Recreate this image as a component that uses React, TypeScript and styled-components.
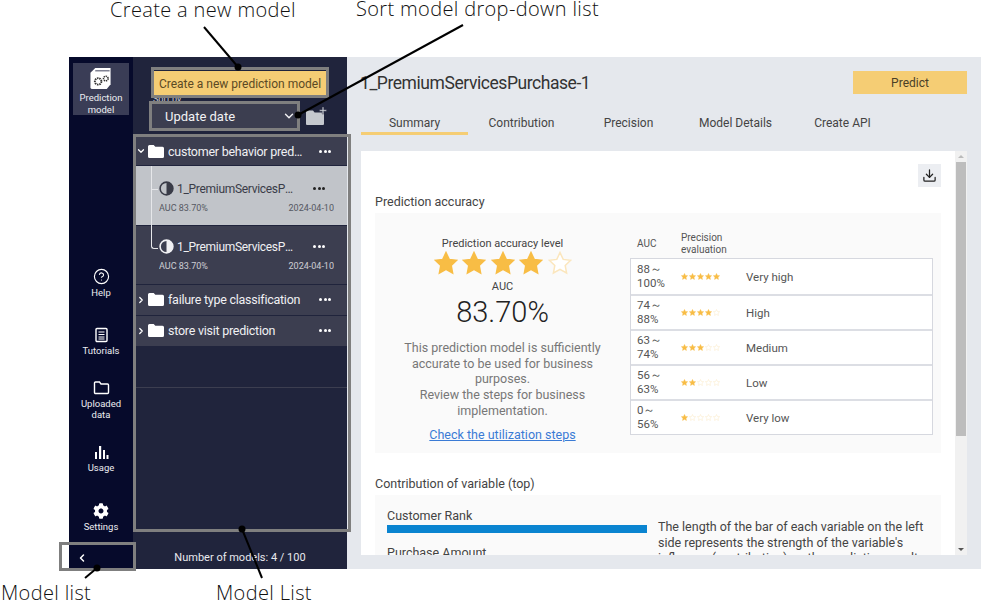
import React from 'react';
import styled, { createGlobalStyle } from 'styled-components';
import { ChevronDown, ChevronLeft, ChevronRight, CircleHelp, Download } from 'lucide-react';
import { FaCog } from 'react-icons/fa';

const GlobalStyle = createGlobalStyle`
  html, body {
    margin: 0;
    padding: 0;
    background: #fff;
    font-family: Roboto, "Noto Sans", "Liberation Sans", sans-serif;
  }
  * { box-sizing: border-box; }
`;

const Page = styled.div`
  position: relative;
  width: 983px;
  height: 603px;
  padding: 57px 0 0 69px;
  overflow: hidden;
`;

const Frame = styled.div`
  display: flex;
  width: 912px;
  height: 512px;
`;

/* left icon rail */
const Rail = styled.nav`
  width: 64px;
  flex: none;
  background: #060a2b;
  display: flex;
  flex-direction: column;
  align-items: stretch;
`;

const RailActive = styled.div`
  margin: 6px 4px 0;
  height: 52px;
  background: #3a3d56;
  display: flex;
  flex-direction: column;
  align-items: center;
  padding-top: 4px;
  gap: 2px;
`;

const RailBottom = styled.div`
  margin-top: auto;
  display: flex;
  flex-direction: column;
`;

const RailItem = styled.div`
  height: 58.5px;
  display: flex;
  flex-direction: column;
  align-items: center;
  justify-content: center;
  color: #fff;
`;

const RailLabel = styled.span`
  color: #eceDf1;
  font-size: 9.5px;
  line-height: 11.5px;
  text-align: center;
`;

const RailIcon = styled.span`
  height: 18px;
  display: flex;
  align-items: center;
  justify-content: center;
  margin-bottom: 1px;
`;

const Collapse = styled.div`
  height: 23px;
  display: flex;
  align-items: center;
  padding-left: 7px;
  color: #fff;
`;

/* model list column */
const ListPanel = styled.aside`
  width: 214px;
  flex: none;
  background: #20243c;
  display: flex;
  flex-direction: column;
`;

const CreateButton = styled.button`
  display: block;
  margin: 14px 0 0 21px;
  width: 172px;
  height: 24px;
  border: none;
  padding: 1px 0 0;
  background: #f5cd74;
  color: #5b4a24;
  font-family: inherit;
  font-size: 12px;
`;

const SortLabel = styled.div`
  margin-left: 20px;
  height: 9px;
  line-height: 9px;
  font-size: 9px;
  color: #c9cbd3;
`;

const SortRow = styled.div`
  display: flex;
  align-items: center;
  margin-left: 19px;
  gap: 9px;
`;

const SortSelect = styled.div`
  width: 145px;
  height: 24px;
  background: #3c3e50;
  color: #f2f2f4;
  font-size: 13px;
  display: flex;
  align-items: center;
  justify-content: space-between;
  padding: 0 1px 0 13px;
`;

const ModelList = styled.div`
  margin-top: 9px;
  flex: 1;
  display: flex;
  flex-direction: column;
  gap: 1px;
  border-bottom: 1px solid #3c3e50;
`;

const FolderRow = styled.div<{ $tall?: boolean }>`
  height: ${p => (p.$tall ? 30 : 28)}px;
  padding: 0 0 ${p => (p.$tall ? 1 : 0)}px 3px;
  background: #3c3e50;
  display: flex;
  align-items: center;
  color: #fff;
  gap: 2px;
`;

const FolderName = styled.span`
  margin-left: 2px;
  width: 136px;
  font-size: 12.5px;
  letter-spacing: -0.25px;
  color: #f0f0f3;
  white-space: nowrap;
  overflow: hidden;
  text-overflow: ellipsis;
`;

const More = styled.span<{ $dark?: boolean; $gap: number }>`
  display: flex;
  gap: 1.5px;
  margin-left: ${p => p.$gap}px;
  & > i {
    width: 3px;
    height: 3px;
    border-radius: 50%;
    background: ${p => (p.$dark ? '#222' : '#fff')};
  }
`;

const ModelRow = styled.div<{ $selected?: boolean }>`
  position: relative;
  height: ${p => (p.$selected ? 59 : 58)}px;
  background: ${p => (p.$selected ? '#c1c4c9' : '#3c3e50')};
  color: ${p => (p.$selected ? '#3a3c48' : '#f0f0f3')};
  padding: ${p => (p.$selected ? 14 : 12)}px 0 0 26px;
`;

const TreeLine = styled.span<{ $last?: boolean }>`
  position: absolute;
  left: 18px;
  top: 0;
  width: 7px;
  height: ${p => (p.$last ? 23 : 24)}px;
  border-left: 1px solid #e6e7ea;
  border-bottom: 1px solid #e6e7ea;
  border-bottom-left-radius: ${p => (p.$last ? '3px' : '0')};
  &::after {
    content: '';
    display: ${p => (p.$last ? 'none' : 'block')};
    position: absolute;
    left: -1px;
    top: 24px;
    height: 36px;
    border-left: 1px solid #e6e7ea;
  }
`;

const ModelTitle = styled.div`
  display: flex;
  align-items: center;
  height: 17px;
`;

const ModelName = styled.span`
  margin-left: 3px;
  width: 122px;
  font-size: 12px;
  letter-spacing: -0.3px;
  white-space: nowrap;
  overflow: hidden;
  text-overflow: ellipsis;
`;

const ModelMeta = styled.div`
  display: flex;
  justify-content: space-between;
  width: 175px;
  margin-top: 6px;
  font-size: 9px;
  line-height: 11px;
  opacity: 0.8;
`;

const ListFooter = styled.div`
  height: 23px;
  margin-top: 158px;
  display: flex;
  align-items: center;
  justify-content: center;
  color: #e8e9ee;
  font-size: 11px;
`;

/* main area */
const Main = styled.main`
  flex: 1;
  background: #e5e8ed;
  padding: 14px;
  display: flex;
  flex-direction: column;
`;

const Header = styled.header`
  display: flex;
  justify-content: space-between;
  align-items: center;
  height: 23px;
`;

const Title = styled.h1`
  margin: 0 0 0 -1px;
  font-size: 17.5px;
  letter-spacing: -0.44px;
  font-weight: 400;
  color: #333;
`;

const PredictButton = styled.button`
  width: 114px;
  height: 23px;
  border: none;
  background: #f5cd74;
  color: #4a4026;
  font-family: inherit;
  font-size: 12px;
`;

const Tabs = styled.div`
  display: flex;
  margin-top: 17px;
  height: 24px;
`;

const Tab = styled.div<{ $active?: boolean }>`
  width: 107px;
  padding-top: 5px;
  text-align: center;
  font-size: 12px;
  line-height: 15px;
  color: #444;
  border-bottom: ${p => (p.$active ? '3px solid #f5cd74' : 'none')};
`;

const Card = styled.div`
  margin-top: 16px;
  flex: 1;
  min-height: 0;
  background: #fff;
  display: flex;
  width: 606px;
`;

const CardBody = styled.div`
  flex: 1;
  min-width: 0;
  overflow: hidden;
  padding: 13px 14px 0;
  display: flex;
  flex-direction: column;
`;

const DownloadRow = styled.div`
  display: flex;
  justify-content: flex-end;
`;

const DownloadButton = styled.div`
  width: 23px;
  height: 23px;
  background: #eceef2;
  display: flex;
  align-items: center;
  justify-content: center;
  color: #222;
`;

const SectionTitle = styled.h2<{ $spaced?: boolean }>`
  margin: ${p => (p.$spaced ? 22 : 6)}px 0 3px;
  font-size: 12.5px;
  line-height: 17px;
  font-weight: 400;
  color: #444;
`;

const AccuracyPanel = styled.section`
  flex: none;
  height: 240px;
  background: #fafafa;
  display: flex;
  padding: 17px 8px 0 0;
`;

const LevelCol = styled.div`
  width: 255px;
  flex: none;
  display: flex;
  flex-direction: column;
  align-items: center;
  text-align: center;
  padding-top: 7px;
`;

const LevelCaption = styled.div`
  font-size: 11px;
  line-height: 13px;
  color: #444;
`;

const BigStars = styled.div`
  display: flex;
  gap: 4.5px;
  height: 24px;
  margin: 1px 0 5px;
`;

const AucValue = styled.div`
  margin-top: 1px;
  font-size: 29px;
  font-weight: 300;
  line-height: 36px;
  color: #222;
`;

const Explain = styled.p`
  margin: 10px 0 0;
  width: 215px;
  font-size: 12.5px;
  line-height: 15.7px;
  color: #777;
`;

const UtilLink = styled.a`
  margin-top: 8px;
  font-size: 12.5px;
  line-height: 16px;
  color: #3a7bd5;
  text-decoration: underline;
`;

const TableCol = styled.div`
  flex: 1;
`;

const TableHead = styled.div`
  display: flex;
  height: 28px;
  align-items: center;
  font-size: 10px;
  line-height: 12px;
  color: #555;
  padding-left: 7px;
`;

const HeadAuc = styled.span`
  width: 44px;
`;

const RateTable = styled.div`
  width: 303px;
  border: 1px solid #d6d8df;
  background: #fff;
`;

const RateRow = styled.div`
  height: 35px;
  display: flex;
  align-items: center;
  padding-left: 6px;
  border-top: 2px solid #dcdee4;
  &:first-child { border-top: none; }
`;

const RateRange = styled.span`
  width: 44px;
  padding-right: 10px;
  font-size: 11.5px;
  line-height: 13.5px;
  color: #555;
`;

const SmallStars = styled.span`
  width: 65px;
  display: flex;
  gap: 1px;
`;

const RateName = styled.span`
  font-size: 11.5px;
  color: #555;
`;

const ContribPanel = styled.section`
  flex: none;
  background: #fafafa;
  height: 120px;
  display: flex;
  padding: 13px 12px 0;
  gap: 11px;
`;

const ContribBars = styled.div`
  width: 260px;
  flex: none;
`;

const VarName = styled.div`
  font-size: 12.5px;
  line-height: 16px;
  color: #444;
`;

const VarBar = styled.div`
  height: 8px;
  margin: 1px 0 12px;
  background: #0a84d0;
`;

const ContribText = styled.p`
  margin: 11px 0 0;
  font-size: 12.5px;
  line-height: 15.5px;
  color: #444;
`;

const Scrollbar = styled.div`
  width: 12px;
  flex: none;
  background: #f1f1f1;
  display: flex;
  flex-direction: column;
  align-items: center;
`;

const ScrollArrow = styled.span<{ $down?: boolean }>`
  flex: none;
  width: 0;
  height: 0;
  margin: 4px 0;
  border-left: 3px solid transparent;
  border-right: 3px solid transparent;
  ${p => (p.$down ? 'border-top: 3px solid #555;' : 'border-bottom: 3px solid #bbb;')}
`;

const ScrollThumb = styled.div`
  width: 10px;
  height: 274px;
  margin-bottom: auto;
  background: #bdbdbd;
`;

/* grey call-out frames and captions laid over the screenshot */
const CalloutBox = styled.div<{ $x: number; $y: number; $w: number; $h: number }>`
  position: absolute;
  left: ${p => p.$x}px;
  top: ${p => p.$y}px;
  width: ${p => p.$w}px;
  height: ${p => p.$h}px;
  border: 3px solid #7f7f7f;
  pointer-events: none;
`;

const Caption = styled.div<{ $x: number; $y: number }>`
  position: absolute;
  left: ${p => p.$x}px;
  top: ${p => p.$y}px;
  font-family: "Open Sans", "Noto Sans", sans-serif;
  font-size: 20px;
  font-weight: 300;
  letter-spacing: 0.35px;
  line-height: 22px;
  color: #111;
  white-space: nowrap;
`;

const Leaders = styled.svg`
  position: absolute;
  left: 0;
  top: 0;
  pointer-events: none;
`;

const STAR = 'M12 1.5l3.2 6.9 7.5.9-5.5 5.2 1.4 7.5L12 18.4 5.4 22l1.4-7.5L1.3 9.3l7.5-.9z';

const Star = ({ size, on }: { size: number; on: boolean }) => (
  <svg width={size} height={size} viewBox="0 0 24 24">
    <path d={STAR} fill={on ? '#f8bd45' : '#fff'} stroke={on ? '#f8bd45' : '#fbe6bd'} strokeWidth="1.5" />
  </svg>
);

const HalfCircle = () => (
  <svg width="15" height="15" viewBox="0 0 15 15">
    <circle cx="7.5" cy="7.5" r="6.4" fill="none" stroke="currentColor" strokeWidth="1.6" />
    <path d="M7.5 1a6.5 6.5 0 0 1 0 13z" fill="currentColor" />
  </svg>
);

const Dots = ({ dark, gap }: { dark?: boolean; gap: number }) => (
  <More $dark={dark} $gap={gap}><i /><i /><i /></More>
);

const PredictionIcon = () => (
  <svg width="24" height="24" viewBox="0 0 24 24">
    <path d="M6 1h16v17l-4 5H3a2 2 0 0 1-2-2V6z" fill="#fff" />
    <path d="M6 4h15" stroke="#3a3d56" strokeWidth="1" />
    <circle cx="9" cy="15" r="3.4" fill="none" stroke="#333" strokeWidth="2" strokeDasharray="1.6 .8" />
    <circle cx="17" cy="12" r="2.4" fill="none" stroke="#333" strokeWidth="1.6" strokeDasharray="1.3 .7" />
  </svg>
);

const TutorialIcon = () => (
  <svg width="15" height="16" viewBox="0 0 15 16" fill="none" stroke="#fff" strokeWidth="1.4">
    <rect x="2" y="1.5" width="11" height="13" rx="1" />
    <path d="M4.5 5h6M4.5 7.5h6M4.5 10h6M4.5 12h6" strokeWidth="1" />
  </svg>
);

const UsageIcon = () => (
  <svg width="15" height="15" viewBox="0 0 15 15" fill="#fff">
    <rect x="1" y="7" width="2" height="7" />
    <rect x="5" y="1" width="2.2" height="13" />
    <rect x="9" y="5" width="2" height="9" />
    <rect x="12.5" y="10" width="2" height="4" />
  </svg>
);

const OutlineFolder = () => (
  <svg width="17" height="15" viewBox="0 0 17 15" fill="none" stroke="#fff" strokeWidth="1.4">
    <path d="M1.5 3a1 1 0 0 1 1-1h4l1.5 2h6.5a1 1 0 0 1 1 1v7.5a1 1 0 0 1-1 1h-12a1 1 0 0 1-1-1z" />
  </svg>
);

const SolidFolder = () => (
  <svg width="16" height="13" viewBox="0 0 16 13" fill="#fff">
    <path d="M0 1.5A1.5 1.5 0 0 1 1.5 0h4.2l1.6 1.8h7.2A1.5 1.5 0 0 1 16 3.3v8.2a1.5 1.5 0 0 1-1.5 1.5h-13A1.5 1.5 0 0 1 0 11.5z" />
  </svg>
);

const AddFolder = () => (
  <svg width="21" height="18" viewBox="0 0 21 18" fill="#c5c8ce">
    <path d="M0 4.5A1 1 0 0 1 1 3.5h6l1.6 2h9.4V17a1 1 0 0 1-1 1H1a1 1 0 0 1-1-1z" />
    <path d="M16.2 0h1.6v2.7h2.7v1.6h-2.7V7h-1.6V4.3h-2.7V2.7h2.7z" stroke="#20243c" strokeWidth=".4" />
  </svg>
);

const rates = [
  { range: '88～100%', stars: 5, name: 'Very high' },
  { range: '74～88%', stars: 4, name: 'High' },
  { range: '63～74%', stars: 3, name: 'Medium' },
  { range: '56～63%', stars: 2, name: 'Low' },
  { range: '0～56%', stars: 1, name: 'Very low' },
];

const tabs = ['Summary', 'Contribution', 'Precision', 'Model Details', 'Create API'];

const App: React.FC = () => (
  <Page>
    <GlobalStyle />
    <Frame>
      <Rail>
        <RailActive>
          <PredictionIcon />
          <RailLabel>Prediction<br />model</RailLabel>
        </RailActive>
        <RailBottom>
          <RailItem><RailIcon><CircleHelp size={17} strokeWidth={1.6} /></RailIcon><RailLabel>Help</RailLabel></RailItem>
          <RailItem><RailIcon><TutorialIcon /></RailIcon><RailLabel>Tutorials</RailLabel></RailItem>
          <RailItem><RailIcon><OutlineFolder /></RailIcon><RailLabel>Uploaded<br />data</RailLabel></RailItem>
          <RailItem><RailIcon><UsageIcon /></RailIcon><RailLabel>Usage</RailLabel></RailItem>
          <RailItem><RailIcon><FaCog size={16} /></RailIcon><RailLabel>Settings</RailLabel></RailItem>
          <Collapse><ChevronLeft size={12} strokeWidth={3} /></Collapse>
        </RailBottom>
      </Rail>

      <ListPanel>
        <CreateButton>Create a new prediction model</CreateButton>
        <SortLabel>Sort by</SortLabel>
        <SortRow>
          <SortSelect>Update date<ChevronDown size={14} strokeWidth={2.4} /></SortSelect>
          <AddFolder />
        </SortRow>
        <ModelList>
          <FolderRow>
            <ChevronDown size={10} strokeWidth={3} />
            <SolidFolder />
            <FolderName>customer behavior prediction</FolderName>
            <Dots gap={13} />
          </FolderRow>
          <ModelRow $selected>
            <TreeLine />
            <ModelTitle>
              <HalfCircle />
              <ModelName>1_PremiumServicesPurchase-1</ModelName>
              <Dots dark gap={14} />
            </ModelTitle>
            <ModelMeta><span>AUC 83.70%</span><span>2024-04-10</span></ModelMeta>
          </ModelRow>
          <ModelRow>
            <TreeLine $last />
            <ModelTitle>
              <HalfCircle />
              <ModelName>1_PremiumServicesPurchase-2</ModelName>
              <Dots gap={14} />
            </ModelTitle>
            <ModelMeta><span>AUC 83.70%</span><span>2024-04-10</span></ModelMeta>
          </ModelRow>
          <FolderRow $tall>
            <ChevronRight size={10} strokeWidth={3} />
            <SolidFolder />
            <FolderName>failure type classification</FolderName>
            <Dots gap={13} />
          </FolderRow>
          <FolderRow $tall>
            <ChevronRight size={10} strokeWidth={3} />
            <SolidFolder />
            <FolderName>store visit prediction</FolderName>
            <Dots gap={13} />
          </FolderRow>
        </ModelList>
        <ListFooter>Number of models: 4 / 100</ListFooter>
      </ListPanel>

      <Main>
        <Header>
          <Title>1_PremiumServicesPurchase-1</Title>
          <PredictButton>Predict</PredictButton>
        </Header>
        <Tabs>
          {tabs.map((t, i) => <Tab key={t} $active={i === 0}>{t}</Tab>)}
        </Tabs>
        <Card>
          <CardBody>
            <DownloadRow>
              <DownloadButton><Download size={15} strokeWidth={2} /></DownloadButton>
            </DownloadRow>
            <SectionTitle>Prediction accuracy</SectionTitle>
            <AccuracyPanel>
              <LevelCol>
                <LevelCaption>Prediction accuracy level</LevelCaption>
                <BigStars>
                  {[1, 2, 3, 4, 5].map(n => <Star key={n} size={24} on={n <= 4} />)}
                </BigStars>
                <LevelCaption>AUC</LevelCaption>
                <AucValue>83.70%</AucValue>
                <Explain>
                  This prediction model is sufficiently accurate to be used for business purposes.<br />
                  Review the steps for business implementation.
                </Explain>
                <UtilLink href="#">Check the utilization steps</UtilLink>
              </LevelCol>
              <TableCol>
                <TableHead>
                  <HeadAuc>AUC</HeadAuc>
                  <span>Precision<br />evaluation</span>
                </TableHead>
                <RateTable>
                  {rates.map(r => (
                    <RateRow key={r.name}>
                      <RateRange>{r.range}</RateRange>
                      <SmallStars>
                        {[1, 2, 3, 4, 5].map(n => <Star key={n} size={7} on={n <= r.stars} />)}
                      </SmallStars>
                      <RateName>{r.name}</RateName>
                    </RateRow>
                  ))}
                </RateTable>
              </TableCol>
            </AccuracyPanel>
            <SectionTitle $spaced>Contribution of variable (top)</SectionTitle>
            <ContribPanel>
              <ContribBars>
                <VarName>Customer Rank</VarName>
                <VarBar />
                <VarName>Purchase Amount</VarName>
              </ContribBars>
              <ContribText>
                The length of the bar of each variable on the left side represents the strength of the variable's influence (contribution) on the prediction result.
              </ContribText>
            </ContribPanel>
          </CardBody>
          <Scrollbar>
            <ScrollArrow />
            <ScrollThumb />
            <ScrollArrow $down />
          </Scrollbar>
        </Card>
      </Main>
    </Frame>

    <CalloutBox $x={151} $y={67} $w={178} $h={31} />
    <CalloutBox $x={149} $y={101} $w={151} $h={30} />
    <CalloutBox $x={133} $y={134} $w={218} $h={398} />
    <CalloutBox $x={59} $y={542} $w={77} $h={29} />

    <Leaders width={983} height={603} viewBox="0 0 983 603">
      <g stroke="#000" strokeWidth="2" fill="#000">
        <line x1="204" y1="27" x2="238" y2="67" />
        <circle cx="238" cy="67" r="3.5" stroke="none" />
        <line x1="463" y1="25" x2="298" y2="115" />
        <circle cx="298" cy="115" r="3.5" stroke="none" />
        <line x1="97" y1="568" x2="85" y2="578" />
        <circle cx="97" cy="568" r="3.5" stroke="none" />
        <line x1="242" y1="529" x2="262" y2="578" />
        <circle cx="242" cy="529" r="3.5" stroke="none" />
      </g>
    </Leaders>
    <Caption $x={110} $y={-1}>Create a new model</Caption>
    <Caption $x={356} $y={-2}>Sort model drop-down list</Caption>
    <Caption $x={1} $y={582}>Model list</Caption>
    <Caption $x={216} $y={582}>Model List</Caption>
  </Page>
);

export default App;
